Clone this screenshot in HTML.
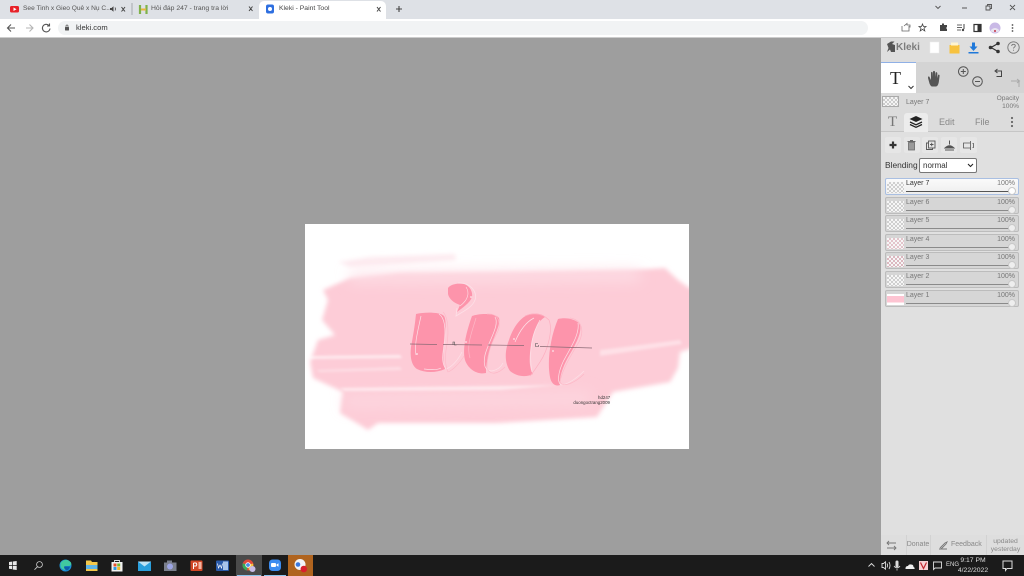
<!DOCTYPE html>
<html><head><meta charset="utf-8"><style>
*{margin:0;padding:0;box-sizing:border-box}
html,body{width:1024px;height:576px;overflow:hidden;background:#9e9e9e;font-family:"Liberation Sans","Noto Sans CJK SC",sans-serif}
#w{position:absolute;left:0;top:0;width:1024px;height:576px;background:#9e9e9e;overflow:hidden;filter:blur(.35px)}
.a{position:absolute;white-space:nowrap}
svg{position:absolute;left:0;top:0}
.lay{position:absolute;left:885px;width:134px;height:17px;background:#d6d6d6;border:1px solid #bcbcbc;border-radius:2px}
.lay .t{position:absolute;left:20px;top:0;font-size:7px;color:#777;line-height:9px}
.lay .p{position:absolute;right:3px;top:0;font-size:7px;color:#777;line-height:9px}
.lay .l{position:absolute;left:20px;right:5px;top:12px;height:1px;background:#8a8a8a}
.lay .k{position:absolute;right:2px;top:8px;width:8px;height:8px;border-radius:50%;background:#eee;border:1px solid #c8c8c8}
.lay .th{position:absolute;left:1px;top:3px;width:17px;height:11px;background-color:#f6f6f6;background-image:conic-gradient(#cfcfcf 25%,#f6f6f6 0 50%,#cfcfcf 0 75%,#f6f6f6 0);background-size:4px 4px}
.btn{position:absolute;top:137px;width:16px;height:16px;background:#e6e6e6;border-radius:2px}
</style></head><body><div id="w">
<!-- chrome -->
<div class="a" style="left:0;top:0;width:1024px;height:19px;background:#dee1e6"></div>
<div class="a" style="left:0;top:19px;width:1024px;height:18px;background:#fff"></div>
<div class="a" style="left:0;top:37px;width:1024px;height:1px;background:#ccc"></div>
<div class="a" style="left:259px;top:1px;width:127px;height:18px;background:#fff;border-radius:5px 5px 0 0"></div>
<div class="a" style="left:58px;top:21px;width:810px;height:14px;background:#f1f3f4;border-radius:7px"></div>
<div class="a" style="left:23px;top:4px;font-size:6.6px;line-height:9px;color:#555">See Tinh x Gieo Quê x Nụ C...</div>
<div class="a" style="left:151px;top:4px;font-size:6.8px;line-height:9px;color:#555">Hỏi đáp 247 - trang tra lời</div>
<div class="a" style="left:279px;top:4px;font-size:6.8px;line-height:9px;color:#444">Kleki - Paint Tool</div>
<div class="a" style="left:76px;top:23px;font-size:7.6px;line-height:10px;color:#333">kleki.com</div>
<!-- canvas -->
<div class="a" style="left:881px;top:38px;width:143px;height:517px;background:#dedede"></div>
<div class="a" style="left:305px;top:224px;width:384px;height:225px;background:#fff"></div>
<svg width="1024" height="576" viewBox="0 0 1024 576">
<defs><filter id="b1" x="-5%" y="-5%" width="110%" height="110%"><feGaussianBlur stdDeviation="2"/></filter>
<filter id="b5" x="-20%" y="-30%" width="140%" height="160%"><feGaussianBlur stdDeviation="7"/></filter>
<filter id="b4" x="-5%" y="-50%" width="110%" height="200%"><feGaussianBlur stdDeviation="1.300"/></filter>
<filter id="b2"><feGaussianBlur stdDeviation=".25"/></filter>
<clipPath id="cv"><rect x="305" y="224" width="384" height="225"/></clipPath></defs>
<g clip-path="url(#cv)">
<g filter="url(#b1)">
<path fill="#fdebf0" d="M338 262L370 257L455 254L456 260L400 264L350 267Z"/>
<path fill="#fdccd7" d="M323 290L350 278L400 273L497 272L630 270L665 268L678 280L689 288L695 288L695 347L680 352L678 368L670 382L613 392L597 417L497 423L378 423L368 430L360 425L340 413L343 392L313 378L310 362L318 340L335 335L322 320L328 300Z"/>
</g>
<g filter="url(#b5)">
<path fill="#fde0e7" d="M350 272L640 270L640 280L350 282Z"/>
<path fill="#fdd6df" d="M345 395L590 392L590 405L345 408Z"/>
</g>
<g filter="url(#b4)">
<path fill="#fff" opacity=".6" d="M308 356L400 355L402 358L310 359Z"/>
<path fill="#fff" opacity=".35" d="M316 370L400 367L402 370L320 372Z"/>
<path fill="#fff" opacity=".55" d="M340 388L500 386L560 385L500 390L345 391Z"/>
<path fill="#fff" opacity=".4" d="M600 350L680 340L682 344L600 356Z"/>
</g>
<g filter="url(#b2)">
<!-- comma -->
<path fill="none" stroke="#fde0e7" stroke-width=".8" d="M458 283C470 282 478 292 475 300C472 308 462 312 456 316L457 308"/>
<path fill="#fd94ab" d="M448 288C451 284 458 283 464 284C470 286 473 292 472 297C470 303 462 308 457 312L460 305C454 303 449 299 448 294Z"/>
<path fill="none" stroke="#fde0e7" stroke-width=".6" d="M466 287C470 293 468 300 460 306"/>
<!-- i -->
<path fill="#fd94ab" d="M416 314C425 312 440 312 444 316C447 321 445 335 444 346C443 356 443 363 445 369C436 373 425 373 417 369C411 365 410 356 411 347C413 336 415 325 416 314Z"/>
<path fill="none" stroke="#fde0e7" stroke-width=".7" d="M421 316C418 330 414 345 416 355M424 369C432 370 438 370 441 368M439 314C445 318 446 330 444 345C442 358 442 364 446 369C452 367 458 360 462 352"/>
<path fill="none" stroke="#fdb8c7" stroke-width=".6" d="M443 312C449 318 449 335 446 350C445 360 446 368 448 372C453 370 460 363 464 356"/>
<!-- u -->
<path fill="#fd94ab" d="M472 316C480 313 496 313 499 318C501 324 494 336 490 349C487 359 486 367 486 373C477 375 468 369 465 360C462 348 467 330 472 316Z"/>
<path fill="none" stroke="#fde0e7" stroke-width=".7" d="M495 317C500 325 489 340 485 355C483 365 485 371 492 371C497 370 501 367 503 363"/>
<path fill="none" stroke="#fdb8c7" stroke-width=".7" d="M487 314C500 313 502 325 496 335C489 347 487 360 487 368C490 376 498 374 505 367M476 318C472 332 466 345 470 358"/>
<!-- a bowl -->
<path fill="#fd94ab" d="M530 314C537 313 543 314 545 317C537 322 533 332 531 345C529 358 529 368 533 374C525 378 516 376 510 371C504 362 505 350 509 340C513 328 520 317 530 314Z"/>
<path fill="none" stroke="#fde0e7" stroke-width=".7" d="M515 342C520 330 526 322 534 318M540 320C533 332 528 350 532 372"/>
<path fill="none" stroke="#fdb0c1" stroke-width=".7" d="M525 316C535 312 543 314 549 320C553 330 548 350 540 362C536 368 533 373 530 376"/>
<!-- a stem -->
<path fill="#fd94ab" d="M558 319C566 317 577 319 580 325C582 332 576 344 570 354C564 364 559 376 560 385C555 387 551 383 550 377C547 362 550 338 558 319Z"/>
<path fill="none" stroke="#fde0e7" stroke-width=".7" d="M578 323C580 335 569 350 563 362C558 373 557 382 561 385C567 385 577 378 584 371"/>
<path fill="none" stroke="#fdb8c7" stroke-width=".7" d="M570 318C583 320 584 332 579 342C571 355 562 370 560 382C563 388 575 383 584 374"/>
<circle cx="417" cy="354" r=".9" fill="#fde7ec"/><circle cx="466" cy="342" r=".9" fill="#fde7ec"/><circle cx="514" cy="339" r=".9" fill="#fde7ec"/><circle cx="553" cy="351" r=".9" fill="#fde7ec"/><circle cx="471" cy="297" r=".9" fill="#fde7ec"/>
<path fill="none" stroke="#8a6a75" stroke-width=".7" d="M410 344L437 344.500M443 344.500L482 345M488 345L524 345.500M540 346.500L592 348"/>
<path fill="none" stroke="#555" stroke-width=".6" d="M453 345v-3h1.500v3h2M538 343.500h-2.500v3h3v-1.500"/>
</g></g>
</svg>
<div class="a" style="left:598px;top:396px;font-size:4.4px;line-height:4.6px;color:#333;text-align:right;width:12px">hd247</div>
<div class="a" style="left:570px;top:400.5px;font-size:4.4px;line-height:4.6px;color:#333;text-align:right;width:40px">duongoctrang2009</div>

<!-- sidebar -->
<div class="a" style="left:881px;top:62px;width:143px;height:31px;background:#d4d4d4"></div>
<div class="a" style="left:881px;top:62px;width:35px;height:31px;background:#fff;border-top:1px solid #8fb0e6"></div>
<div class="a" style="left:881px;top:93px;width:143px;height:41px;background:#dcdcdc"></div>
<div class="a" style="left:881px;top:131px;width:143px;height:1px;background:#c6c6c6"></div>
<div class="a" style="left:904px;top:113px;width:24px;height:19px;background:#ececec;border-radius:3px 3px 0 0"></div>
<div class="a" style="left:881px;top:132px;width:143px;height:403px;background:#e0e0e0"></div>
<div class="a" style="left:896px;top:41px;font-size:10px;line-height:14px;font-weight:bold;color:#7c7c7c">Kleki</div>
<div class="a" style="left:890px;top:67px;font-family:'Liberation Serif',serif;font-size:18px;line-height:22px;color:#222">T</div>
<div class="a" style="left:888px;top:114px;font-family:'Liberation Serif',serif;font-size:15px;line-height:17px;color:#777">T</div>
<div class="a" style="left:906px;top:98px;font-size:7px;line-height:9px;color:#777">Layer 7</div>
<div class="a" style="left:984px;top:95px;width:35px;text-align:right;font-size:6.600px;line-height:7.500px;color:#777">Opacity<br>100%</div>
<div class="a" style="left:882px;top:96px;width:17px;height:11px;border:1px solid #aaa;background-color:#f4f4f4;background-image:conic-gradient(#ccc 25%,#f4f4f4 0 50%,#ccc 0 75%,#f4f4f4 0);background-size:4px 4px"></div>
<div class="a" style="left:939px;top:116px;font-size:9px;line-height:12px;color:#888">Edit</div>
<div class="a" style="left:975px;top:116px;font-size:9px;line-height:12px;color:#888">File</div>
<div class="btn" style="left:885px"></div><div class="btn" style="left:904px"></div><div class="btn" style="left:922px"></div><div class="btn" style="left:941px"></div><div class="btn" style="left:960px;width:17px"></div>
<div class="a" style="left:885px;top:160px;font-size:8.400px;line-height:11px;color:#333">Blending</div>
<div class="a" style="left:919px;top:158px;width:58px;height:15px;background:#fff;border:1px solid #777;border-radius:2px;font-size:8px;line-height:13px;padding-left:3px;color:#333">normal</div>

<div class="lay" style="top:178px;background:linear-gradient(#fafafa,#eee);border-color:#a9bfe2"><div class="th"></div><div class="t" style="color:#333">Layer 7</div><div class="p">100%</div><div class="l" style="background:#555"></div><div class="k" style="background:#fff"></div></div>
<div class="lay" style="top:197px"><div class="th"></div><div class="t">Layer 6</div><div class="p">100%</div><div class="l"></div><div class="k"></div></div>
<div class="lay" style="top:215px"><div class="th"></div><div class="t">Layer 5</div><div class="p">100%</div><div class="l"></div><div class="k"></div></div>
<div class="lay" style="top:234px"><div class="th" style="background-image:conic-gradient(#e3c4cb 25%,#f6f6f6 0 50%,#e3c4cb 0 75%,#f6f6f6 0)"></div><div class="t">Layer 4</div><div class="p">100%</div><div class="l"></div><div class="k"></div></div>
<div class="lay" style="top:252px"><div class="th" style="background-image:conic-gradient(#dcb8c0 25%,#f6f6f6 0 50%,#dcb8c0 0 75%,#f6f6f6 0)"></div><div class="t">Layer 3</div><div class="p">100%</div><div class="l"></div><div class="k"></div></div>
<div class="lay" style="top:271px"><div class="th"></div><div class="t">Layer 2</div><div class="p">100%</div><div class="l"></div><div class="k"></div></div>
<div class="lay" style="top:290px"><div class="th" style="background:linear-gradient(#fff 20%,#fdc4d2 20% 75%,#fff 75%)"></div><div class="t">Layer 1</div><div class="p">100%</div><div class="l"></div><div class="k"></div></div>

<div class="a" style="left:906px;top:535px;width:1px;height:20px;background:#d2d2d2"></div>
<div class="a" style="left:930px;top:535px;width:1px;height:20px;background:#d2d2d2"></div>
<div class="a" style="left:986px;top:535px;width:1px;height:20px;background:#d2d2d2"></div>
<div class="a" style="left:906px;top:540px;font-size:7px;line-height:10px;color:#888;width:24px;text-align:center">Donate</div>
<div class="a" style="left:951px;top:540px;font-size:7px;line-height:10px;color:#888">Feedback</div>
<div class="a" style="left:987px;top:538px;width:37px;text-align:center;font-size:6.800px;line-height:8px;color:#888">updated<br>yesterday</div>

<!-- taskbar -->
<div class="a" style="left:0;top:555px;width:1024px;height:21px;background:#1b1b1b"></div>
<div class="a" style="left:236px;top:555px;width:26px;height:21px;background:#4a4a4a"></div>
<div class="a" style="left:288px;top:555px;width:25px;height:21px;background:#b0641f"></div>
<div class="a" style="left:237px;top:575px;width:24px;height:1px;background:#8cc4ee"></div>
<div class="a" style="left:264px;top:575px;width:22px;height:1px;background:#8cc4ee"></div>
<div class="a" style="left:955px;top:556px;width:36px;text-align:center;font-size:6.800px;line-height:9.500px;color:#ddd">9:17 PM<br>4/22/2022</div>
<div class="a" style="left:946px;top:561px;font-size:6px;line-height:8px;color:#ddd">ENG</div>

<svg width="1024" height="576" viewBox="0 0 1024 576">
<g>
<!-- tab icons -->
<rect x="10" y="6" width="9" height="6.500" rx="1.500" fill="#e8232a"/><path d="M13.500 7.500v3.500l3-1.700z" fill="#fff"/>
<path d="M110 8h1.500l2-1.700v5.400l-2-1.700H110z" fill="#444"/><path d="M115 7.500q1 1.500 0 3" stroke="#444" fill="none" stroke-width=".7"/>
<g stroke="#444" stroke-width="1" fill="none"><path d="M121.500 7l3.500 4.500M125 7l-3.500 4.500M249 6.500l3.500 4.500M252.500 6.500l-3.500 4.500M377 7l3.500 4.500M380.500 7l-3.500 4.500"/></g>
<rect x="131.500" y="3" width="1" height="12" fill="#a6a9ae"/>
<path d="M140 5v9M146.500 5v9" stroke="#7fb24a" stroke-width="2.200"/><path d="M141 9.500h5" stroke="#e8b53a" stroke-width="2"/>
<rect x="266" y="4.500" width="8" height="9" rx="2" fill="#2e6fe0"/><circle cx="270" cy="9" r="2" fill="#fff"/>
<path d="M396 9h6M399 6v6" stroke="#444" stroke-width="1.100"/>
<!-- window controls -->
<g stroke="#555" fill="none" stroke-width=".9"><path d="M935.500 6l2.500 2.500 2.500-2.500M962 8h5M986 6h4v4h-4zM987.500 6v-1.500h4v4h-1.500M1010 5l5 5M1015 5l-5 5"/></g>
<!-- nav -->
<g fill="none" stroke-width="1.100" stroke="#555"><path d="M8 28h7M11 24.500L7.500 28l3.500 3.500"/><path stroke="#b5b5b5" d="M26 28h7M29.500 24.500L33 28l-3.500 3.500"/><path d="M49 25.500a3.800 3.800 0 1 0 1 3M49.500 23.500v2.500H47"/></g>
<rect x="65" y="27" width="4" height="3.500" rx=".5" fill="#555"/><path d="M66 27v-1a1 1 0 0 1 2 0v1" fill="none" stroke="#555" stroke-width=".7"/>
<!-- omnibox right -->
<g fill="none" stroke="#666" stroke-width=".8"><path d="M902 26v5h7v-5M904 26l3-2.500v1.500h3v2.500"/><path d="M922.500 24l1 2.500h2.500l-2 1.700.8 2.700-2.300-1.500-2.300 1.500.8-2.700-2-1.700h2.500z" stroke="#444"/></g>
<path d="M940 25h2v-1.500h2V25h3v2.500h-1v1h1V31h-7z" fill="#444"/>
<path d="M957 25h5M957 27.500h5M957 30h4" stroke="#666" stroke-width=".9"/><path d="M964 24v5" stroke="#444" stroke-width="1"/><circle cx="963" cy="30" r="1.200" fill="#444"/>
<rect x="974" y="24.500" width="7" height="7" fill="none" stroke="#333" stroke-width="1.200"/><rect x="977.500" y="24.500" width="3.500" height="7" fill="#333"/>
<circle cx="995" cy="28" r="5.500" fill="#c9b9e6"/><path d="M991 30q4-4 8 0v1.500q-4 2-8 0z" fill="#e8e4f0"/><circle cx="995" cy="31" r="1" fill="#c4344a"/>
<g fill="#555"><circle cx="1012.500" cy="25" r=".9"/><circle cx="1012.500" cy="28" r=".9"/><circle cx="1012.500" cy="31" r=".9"/></g>

<!-- kleki top row -->
<path d="M887 44l4-2.500h3.500L892 44l3 1v7h-4l-1-2.500-3 2.500 1.500-4z" fill="#555"/>
<rect x="930" y="42" width="9" height="11" fill="#fff" stroke="#eee" stroke-width=".5"/>
<path d="M949.500 45h10v8.500h-10z" fill="#f7c23f"/><rect x="951" y="42.500" width="7" height="3" fill="#fff4d0"/>
<path d="M972 42.500h3v4h2.500L973.500 51 969.500 46.500H972zM968.500 52h10v1.500h-10z" fill="#1f78d9"/>
<g fill="none" stroke="#333" stroke-width="1.200"><path d="M998 43.500l-7 4 7 4"/></g><g fill="#333"><circle cx="998" cy="43.500" r="1.800"/><circle cx="990.500" cy="47.500" r="1.800"/><circle cx="998" cy="51.500" r="1.800"/></g>
<circle cx="1013.500" cy="47.500" r="5.700" fill="none" stroke="#777" stroke-width=".9"/>
<path d="M1011.700 46q0-1.700 1.800-1.700 1.800 0 1.800 1.500c0 1.300-1.800 1.300-1.800 2.700M1013.500 49.700v1" fill="none" stroke="#777" stroke-width=".9"/>
<!-- tools -->
<path d="M908.500 86l2.500 2.500 2.500-2.500" fill="none" stroke="#333" stroke-width="1"/>
<path d="M928 78c0-2 1-2 1.500-1l1.500 3v-7c0-1.500 1.500-1.500 1.700 0l.3 4v-5c0-1.500 2-1.500 2 0v5l.5-4c.2-1.500 1.800-1 1.800.3v5l.7-3c.3-1 1.700-.8 1.600.4l-.8 6.300c-.4 2.500-1.500 4.500-2.800 4.500h-3.500c-1.500 0-2-1-3-3z" fill="#555"/>
<g fill="none" stroke="#555" stroke-width="1"><circle cx="963.300" cy="71.500" r="4.800"/><path d="M960.800 71.500h5M963.300 69v5"/><circle cx="977.500" cy="81.500" r="4.800"/><path d="M975 81.500h5"/><path d="M995.500 71h6v5.500h-5M997.500 69l-2.500 2 2.500 2" stroke="#444"/><path stroke="#aaa" d="M1011 81h8v6M1017 79l2.500 2-2.500 2"/></g>
<!-- tabs -->
<path d="M916 116l6.500 3-6.500 3-6.500-3z" fill="#222"/><path d="M910 122l6 2.800 6-2.800M910 124.500l6 2.800 6-2.800" fill="none" stroke="#222" stroke-width="1.300"/>
<g fill="#666"><circle cx="1012" cy="118" r="1.100"/><circle cx="1012" cy="122" r="1.100"/><circle cx="1012" cy="126" r="1.100"/></g>
<!-- buttons -->
<path d="M893 141.500v7M889.500 145h7" stroke="#333" stroke-width="2.200"/>
<path d="M908.500 142.500h6v7.500h-6z" fill="#999" stroke="#666" stroke-width=".8"/><path d="M907.500 141.500h8M910 140.500h3" stroke="#666" stroke-width="1"/>
<g fill="none" stroke="#555" stroke-width=".9"><rect x="928.500" y="141" width="6.500" height="7"/><path d="M928.500 143h-2v6.500h6v-1.500M930 144.500h3.500M931.700 142.800v3.500"/></g>
<path d="M949.500 140.500v4M945 148q4.500-4.500 9 0zM945 150h9" stroke="#555" fill="#555" stroke-width="1"/>
<g fill="none" stroke="#555" stroke-width=".8"><path d="M963.500 143h7v5h-7zM970.500 141v9M972.500 143.500h1v4h-1"/></g>
<path d="M968 164l2.500 2.500 2.500-2.500" fill="none" stroke="#222" stroke-width="1.100"/>
<!-- bottom -->
<g fill="none" stroke="#777" stroke-width=".9"><path d="M887 543h9M889 541l-2 2 2 2M887 548h9M894 546l2 2-2 2M939 549h8M940 548l5-5 2-1-1 2-5 5"/></g>
<!-- taskbar icons -->
<path d="M9 562l3-.4v3.400H9zM12.700 561.500l4-.5v4h-4zM9 565.700h3v3.400l-3-.4zM12.700 565.700h4v4.300l-4-.5z" fill="#e8e8e8"/>
<circle cx="39.500" cy="564.500" r="2.900" fill="none" stroke="#ccc" stroke-width=".8"/><path d="M37.500 566.700l-3 3" stroke="#ccc" stroke-width=".9"/>
<circle cx="65.500" cy="565.500" r="6" fill="#1b8fd6"/><path d="M60.500 563q5-6 10.500-.5 1 3-2 3.500h-4q-.5 2.500 3 3.500-6 1.500-7.500-3z" fill="#41c9a0"/><path d="M64 566.500h6q-.5 3-3 4-3-1-3-4z" fill="#0d5ea8"/>
<path d="M86 560.500h5l1 1.500h5.500v9H86z" fill="#f3c74a"/><rect x="86" y="565" width="11.500" height="4" fill="#5fb4e6"/>
<path d="M111.500 562h11v9.500h-11z" fill="#f1f1f1"/><path d="M114.500 562v-1.500h5v1.500" fill="none" stroke="#ddd" stroke-width=".9"/>
<rect x="113.500" y="563.500" width="3" height="3" fill="#e8512c"/><rect x="117.200" y="563.500" width="3" height="3" fill="#7ab82e"/><rect x="113.500" y="567" width="3" height="3" fill="#2e9ae0"/><rect x="117.200" y="567" width="3" height="3" fill="#f5b92a"/>
<path d="M138 561.500h13v9.500h-13z" fill="#2a9fdc"/><path d="M138 561.500l6.500 5 6.500-5z" fill="#bde3f6"/>
<path d="M164 562.500h12.500v8.500H164z" fill="#7a7f8c"/><rect x="167" y="560.500" width="5" height="2" fill="#7a7f8c"/><circle cx="170" cy="566.500" r="3" fill="#9ca5e6"/>
<rect x="190.500" y="560.500" width="12" height="10.500" rx="1" fill="#d24726"/><path d="M193.500 563v6M193.500 563h2.500q1.500 1.500 0 3h-2.500" fill="none" stroke="#fff" stroke-width="1"/><rect x="198.500" y="562" width="3" height="7" fill="#f4b4a0"/>
<rect x="216" y="560.500" width="13" height="10.500" rx="1" fill="#2a5aa8"/><rect x="223" y="561.500" width="5" height="8.500" fill="#a8c4ea"/><path d="M217.500 563.500l1 4.500 1.500-3 1.500 3 1-4.500" fill="none" stroke="#fff" stroke-width=".7"/>
<circle cx="248" cy="565" r="5.500" fill="#e24a3b"/><path d="M248 565l-5.200-1.700a5.500 5.500 0 0 0 4 7.200z" fill="#3bab5b"/><path d="M248 565l1 5.500a5.500 5.500 0 0 0 4-7z" fill="#f5c33c"/><circle cx="248" cy="565" r="2.300" fill="#4a8ae8" stroke="#fff" stroke-width=".8"/><circle cx="252.500" cy="569" r="3" fill="#c8bde8"/>
<rect x="269" y="559.500" width="12" height="11.500" rx="3.500" fill="#3c8cf0"/><rect x="271" y="563" width="5" height="4" rx="1" fill="#fff"/><path d="M276.500 564.500l2-1.200v3.500l-2-1.200z" fill="#fff"/>
<circle cx="300" cy="564.500" r="5.500" fill="#f4f4f6"/><circle cx="298" cy="564.500" r="2.300" fill="#3a79e0"/><circle cx="303.800" cy="569" r="3.300" fill="#d9202c"/>
<!-- tray -->
<g fill="none" stroke="#ddd" stroke-width=".9"><path d="M868.500 566.500l3-3 3 3M882 563.500h1.500l2-1.700v7.400l-2-1.700H882zM887 563.500q1 2 0 4M889 562q2 3.500 0 7M933.500 562h8v6h-6.500l-1.500 1.500z"/><path d="M1003 561h9v7.500h-5l-1.500 2v-2H1003z" stroke-width="1"/></g>
<rect x="895.500" y="560.500" width="3" height="7" rx="1.500" fill="#ddd"/><path d="M894 566q3 4 6 0M897 569v1.500" fill="none" stroke="#ddd" stroke-width=".8"/>
<path d="M905.500 568.500q0-2.500 2.500-2.500 1-2 3-1.500 2.500 0 2.500 2.500 1.500.5 1 2h-9z" fill="#eee"/>
<rect x="919" y="561" width="9" height="9" fill="#f6d2d5"/><path d="M920.500 562.500l3 6 3-6" fill="none" stroke="#c2282f" stroke-width="1.200"/>
</g>
</svg>
</div></body></html>
